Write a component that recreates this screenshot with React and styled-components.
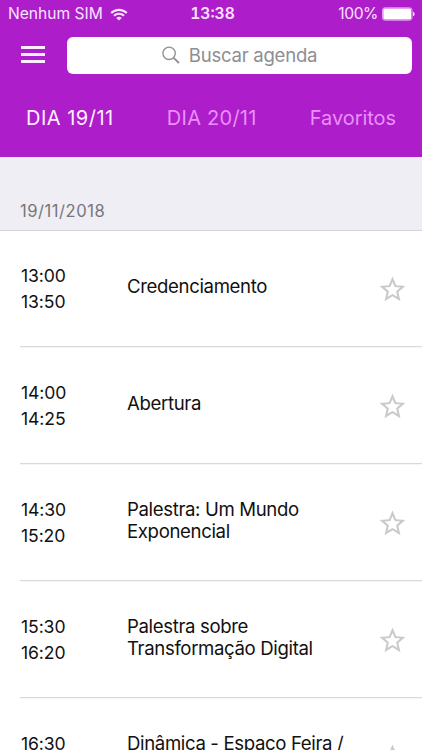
import React from 'react';
import styled, { createGlobalStyle } from 'styled-components';

const GlobalStyle = createGlobalStyle`
  * {
    box-sizing: border-box;
  }

  body {
    margin: 0;
    background-color: #ffffff;
    font-family: Inter, "Liberation Sans", sans-serif;
    overflow: hidden;
  }
`

const Container = styled.div`
  width: 100%;
  height: 750px;
  display: flex;
  flex-direction: column;
  overflow: hidden;
`

const Header = styled.header`
  flex: none;
  height: 157px;
  background-color: #ad1dca;
  color: #ffffff;
`

const StatusBar = styled.div`
  height: 28px;
  padding: 0 7px 0 8px;
  display: grid;
  grid-template-columns: 1fr auto 1fr;
  align-items: center;
  line-height: 28px;
  color: #fbe4ff;
`

const Carrier = styled.div`
  display: flex;
  align-items: center;
  gap: 7px;
  font-size: 15.6px;
`

const Clock = styled.div`
  padding-left: 2px;
  font-size: 15.6px;
  font-weight: 600;
  font-variant-numeric: tabular-nums;
`

const Battery = styled.div`
  display: flex;
  align-items: center;
  justify-content: flex-end;
  gap: 4px;
  font-size: 15.6px;
  letter-spacing: -0.4px;
`

const SearchRow = styled.div`
  height: 55px;
  padding: 9px 10px 9px 21px;
  display: flex;
  align-items: center;
`

const MenuButton = styled.button`
  width: 24px;
  height: 17px;
  margin: 0 22px 2px 0;
  padding: 0;
  border: none;
  background: none;
  display: flex;
  flex-direction: column;
  justify-content: space-between;
`

const MenuLine = styled.span`
  width: 24px;
  height: 3px;
  background-color: #fdeeff;
`

const SearchField = styled.div`
  flex: 1;
  height: 37px;
  padding: 0 0 2px;
  border-radius: 6px;
  background-color: #ffffff;
  display: flex;
  justify-content: center;
  align-items: center;
  gap: 9px;
  font-size: 18.6px;
  letter-spacing: -0.28px;
  color: #8e8e93;
`

const TabBar = styled.nav`
  height: 70px;
  padding: 0 26px;
  display: flex;
  justify-content: space-between;
`

const Tab = styled.div`
  font-size: 20px;
  line-height: 70px;
  letter-spacing: ${props => props.$spacing};
  color: ${props => props.$active ? '#fff0ff' : '#ea8ffa'};
`

const DateHeader = styled.div`
  flex: none;
  height: 74px;
  padding: 42px 20px 0;
  border-bottom: 1px solid #d5d4da;
  background-color: #efeef4;
  font-size: 16.6px;
  line-height: 24px;
  letter-spacing: 0.52px;
  color: #76767b;
`

const Row = styled.div`
  flex: none;
  height: 117px;
  padding-left: 20px;
`

const RowInner = styled.div`
  height: 116px;
  border-bottom: 1px solid #d9d9dd;
  box-shadow: 0 1px 0 #f6f6f7;
  display: flex;
  align-items: flex-start;
`

const TimeBox = styled.div`
  width: 107px;
  padding: 32px 0 0 1px;
  font-size: 17.6px;
  line-height: 26px;
  letter-spacing: -0.1px;
  color: #111111;
`

const Title = styled.div`
  width: 236px;
  padding-top: ${props => props.$tall ? '33px' : '44px'};
  font-size: 18.6px;
  line-height: 22px;
  letter-spacing: -0.36px;
  white-space: pre;
  color: #111111;
`

const StarButton = styled.button`
  margin: 43px 0 0 13.5px;
  padding: 0;
  border: none;
  background: none;
  line-height: 0;
`

function WifiIcon() {
  return (
    <svg width="18" height="13" viewBox="0 0 18 13" fill="none" stroke="#fbe4ff" strokeWidth="2.1">
      <path d="M1.2 5.1a11 11 0 0 1 15.6 0" />
      <path d="M4 7.8a7.1 7.1 0 0 1 10 0" />
      <path d="M6.2 10a4 4 0 0 1 5.6 0L9 12.6z" fill="#fbe4ff" stroke="none" />
    </svg>
  );
}

function BatteryIcon() {
  return (
    <svg width="33" height="14" viewBox="0 0 33 14" fill="none">
      <rect x="0.5" y="0.8" width="29.5" height="12.4" rx="2.3" stroke="#e9a0f5" />
      <rect x="1.3" y="1.6" width="27.9" height="10.8" rx="1.4" fill="#ffffff" />
      <path d="M31 4.8c1.3.4 1.6 1.3 1.6 2.2S32.3 8.8 31 9.2z" fill="#fbe4ff" />
    </svg>
  );
}

function SearchIcon() {
  return (
    <svg width="18" height="18" viewBox="0 0 18 18" fill="none" stroke="#8e8e93" strokeWidth="1.3">
      <circle cx="7.1" cy="7.3" r="6.2" />
      <path d="M11.6 11.8L17 17" strokeWidth="1.8" />
    </svg>
  );
}

function StarIcon() {
  return (
    <svg width="31" height="31" viewBox="0 0 24 24" fill="#cacaca">
      <path d="M22 9.24l-7.19-.62L12 2 9.19 8.63 2 9.24l5.46 4.73L5.82 21 12 17.27 18.18 21l-1.63-7.03L22 9.24zM12 15.4l-3.76 2.27 1-4.28-3.32-2.88 4.38-.38L12 6.1l1.71 4.04 4.38.38-3.32 2.88 1 4.28L12 15.4z" />
    </svg>
  );
}

function App() {

  const agendaList = [
    {
      start : '13:00',
      end : '13:50',
      title : 'Credenciamento'
    },
    {
      start : '14:00',
      end : '14:25',
      title : 'Abertura'
    },
    {
      start : '14:30',
      end : '15:20',
      title : 'Palestra: Um Mundo\nExponencial',
      tall : true
    },
    {
      start : '15:30',
      end : '16:20',
      title : 'Palestra sobre\nTransformação Digital',
      tall : true
    },
    {
      start : '16:30',
      title : 'Dinâmica - Espaço Feira /',
      tall : true
    }
  ]

  return (
    <>
      <GlobalStyle />
      <Container>
        <Header>
          <StatusBar>
            <Carrier>Nenhum SIM<WifiIcon /></Carrier>
            <Clock>13:38</Clock>
            <Battery>100%<BatteryIcon /></Battery>
          </StatusBar>
          <SearchRow>
            <MenuButton aria-label="Menu">
              <MenuLine />
              <MenuLine />
              <MenuLine />
            </MenuButton>
            <SearchField><SearchIcon />Buscar agenda</SearchField>
          </SearchRow>
          <TabBar>
            <Tab $spacing="0.5px" $active>DIA 19/11</Tab>
            <Tab $spacing="0.25px">DIA 20/11</Tab>
            <Tab $spacing="-0.05px">Favoritos</Tab>
          </TabBar>
        </Header>
        <DateHeader>19/11/2018</DateHeader>
        {agendaList.map((item) => (
          <Row key={item.start}>
            <RowInner>
              <TimeBox>
                <div>{item.start}</div>
                {item.end && <div>{item.end}</div>}
              </TimeBox>
              <Title $tall={item.tall}>{item.title}</Title>
              <StarButton aria-label="Favoritar"><StarIcon /></StarButton>
            </RowInner>
          </Row>
        ))}
      </Container>
    </>
  );
}

export default App;
